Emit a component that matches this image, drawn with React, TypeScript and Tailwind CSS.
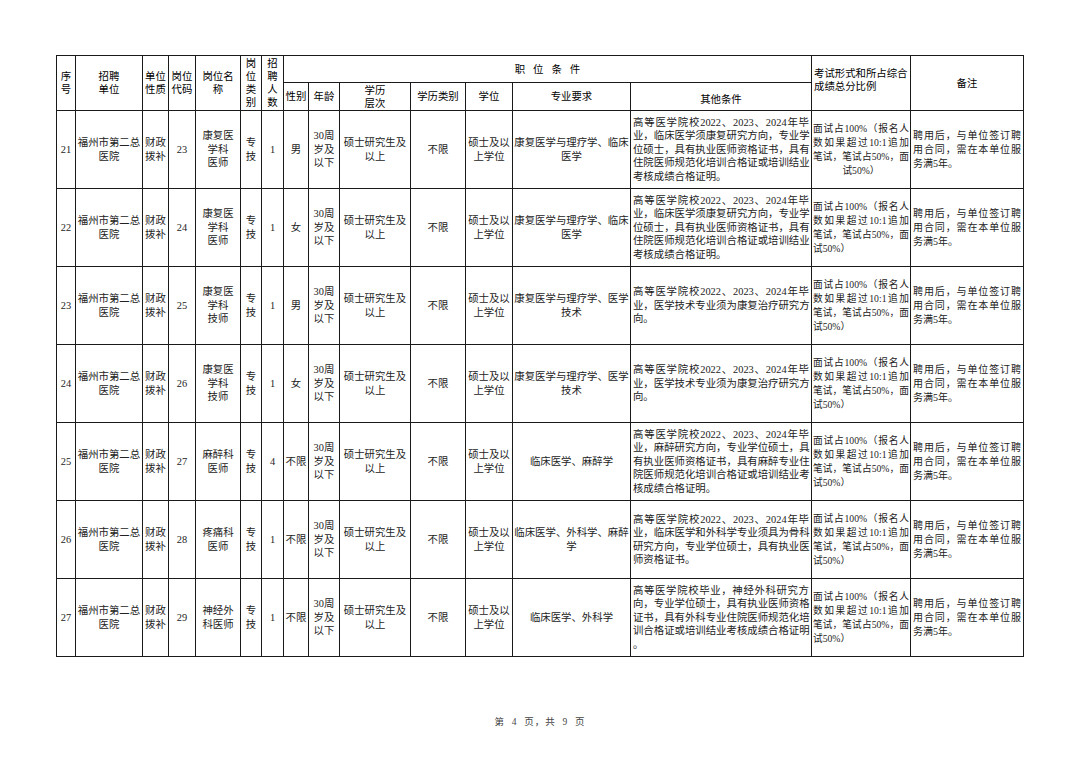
import React from 'react';

const serif = { fontFamily: '"Liberation Serif", "Noto Sans CJK SC", serif' };
const sans = { fontFamily: '"Liberation Sans", "Noto Sans CJK SC", sans-serif' };

type Row = {
  no: string;
  code: string;
  name: string[];
  count: string;
  sex: string;
  major: string[];
  other: string[];
  examCenter?: boolean;
};

const exam = ['面试占100%（报名人', '数如果超过10:1追加', '笔试，笔试占50%，面', '试50%）'];
const note = ['聘用后，与单位签订聘', '用合同，需在本单位服', '务满5年。'];

const kangfuOther = [
  '高等医学院校2022、2023、2024年毕',
  '业，临床医学须康复研究方向，专业学',
  '位硕士，具有执业医师资格证书，具有',
  '住院医师规范化培训合格证或培训结业',
  '考核成绩合格证明。',
];
const jishuOther = ['高等医学院校2022、2023、2024年毕', '业，医学技术专业须为康复治疗研究方', '向。'];

const rows: Row[] = [
  { no: '21', code: '23', name: ['康复医', '学科', '医师'], count: '1', sex: '男', major: ['康复医学与理疗学、临床', '医学'], other: kangfuOther, examCenter: true },
  { no: '22', code: '24', name: ['康复医', '学科', '医师'], count: '1', sex: '女', major: ['康复医学与理疗学、临床', '医学'], other: kangfuOther },
  { no: '23', code: '25', name: ['康复医', '学科', '技师'], count: '1', sex: '男', major: ['康复医学与理疗学、医学', '技术'], other: jishuOther },
  { no: '24', code: '26', name: ['康复医', '学科', '技师'], count: '1', sex: '女', major: ['康复医学与理疗学、医学', '技术'], other: jishuOther },
  {
    no: '25', code: '27', name: ['麻醉科', '医师'], count: '4', sex: '不限', major: ['临床医学、麻醉学'],
    other: [
      '高等医学院校2022、2023、2024年毕',
      '业，麻醉研究方向，专业学位硕士，具',
      '有执业医师资格证书，具有麻醉专业住',
      '院医师规范化培训合格证或培训结业考',
      '核成绩合格证明。',
    ],
  },
  {
    no: '26', code: '28', name: ['疼痛科', '医师'], count: '1', sex: '不限', major: ['临床医学、外科学、麻醉', '学'],
    other: [
      '高等医学院校2022、2023、2024年毕',
      '业，临床医学和外科学专业须具为骨科',
      '研究方向，专业学位硕士，具有执业医',
      '师资格证书。',
    ],
  },
  {
    no: '27', code: '29', name: ['神经外', '科医师'], count: '1', sex: '不限', major: ['临床医学、外科学'],
    other: [
      '高等医学院校毕业，神经外科研究方',
      '向，专业学位硕士，具有执业医师资格',
      '证书，具有外科专业住院医师规范化培',
      '训合格证或培训结业考核成绩合格证明',
      '。',
    ],
  },
];

function Center({ lines }: { lines: string[] }) {
  return (
    <div className="text-center">
      {lines.map((l, i) => (
        <div key={i} className="whitespace-nowrap">{l}</div>
      ))}
    </div>
  );
}

function Justified({ lines, centerLast }: { lines: string[]; centerLast?: boolean }) {
  return (
    <div>
      {lines.map((l, i) => (
        <div
          key={i}
          className={
            i < lines.length - 1
              ? 'whitespace-nowrap text-justify [text-align-last:justify]'
              : centerLast
                ? 'whitespace-nowrap text-center'
                : 'whitespace-nowrap text-left'
          }
        >
          {l}
        </div>
      ))}
    </div>
  );
}

const th = 'border border-[#1a1a1a] px-[1px] align-middle font-normal text-center';
const td = 'border border-[#1a1a1a] px-[1px] align-middle';

export default function App() {
  return (
    <div className="min-h-[764px] w-[1080px] bg-white pt-[55px] text-[#1a1a1a]">
      <table
        className="mx-auto w-[967px] table-fixed border-collapse text-[10.4px] leading-[13.5px]"
        style={serif}
      >
        <colgroup>
          <col className="w-[19px]" />
          <col className="w-[67px]" />
          <col className="w-[26px]" />
          <col className="w-[27px]" />
          <col className="w-[45px]" />
          <col className="w-[21px]" />
          <col className="w-[22px]" />
          <col className="w-[25px]" />
          <col className="w-[31px]" />
          <col className="w-[71px]" />
          <col className="w-[55px]" />
          <col className="w-[47px]" />
          <col className="w-[118px]" />
          <col className="w-[181px]" />
          <col className="w-[99px]" />
          <col className="w-[113px]" />
        </colgroup>
        <thead style={sans} className="text-[10.4px] leading-[13px] text-black">
          <tr className="h-[27px]">
            <th rowSpan={2} className={th}><Center lines={['序', '号']} /></th>
            <th rowSpan={2} className={th}><Center lines={['招聘', '单位']} /></th>
            <th rowSpan={2} className={th}><Center lines={['单位', '性质']} /></th>
            <th rowSpan={2} className={th}><Center lines={['岗位', '代码']} /></th>
            <th rowSpan={2} className={th}><Center lines={['岗位名', '称']} /></th>
            <th rowSpan={2} className={th}><Center lines={['岗', '位', '类', '别']} /></th>
            <th rowSpan={2} className={th}><Center lines={['招', '聘', '人', '数']} /></th>
            <th colSpan={7} className={th}>
              <span className="pl-[8px] tracking-[8px]">职位条件</span>
            </th>
            <th rowSpan={2} className={`${th} !text-left`}>
              <div className="pl-[1px] pb-[6px]">考试形式和所占综合<br />成绩总分比例</div>
            </th>
            <th rowSpan={2} className={th}>备注</th>
          </tr>
          <tr className="h-[28px]">
            <th className={th}>性别</th>
            <th className={th}>年龄</th>
            <th className={th}><Center lines={['学历', '层次']} /></th>
            <th className={th}>学历类别</th>
            <th className={th}>学位</th>
            <th className={th}>专业要求</th>
            <th className={th}><div className="pt-[6px]">其他条件</div></th>
          </tr>
        </thead>
        <tbody className="text-[#222]">
          {rows.map((r) => (
            <tr key={r.no} className="h-[78px]">
              <td className={`${td} text-center`}>{r.no}</td>
              <td className={td}><Center lines={['福州市第二总', '医院']} /></td>
              <td className={td}><Center lines={['财政', '拨补']} /></td>
              <td className={`${td} text-center`}>{r.code}</td>
              <td className={td}><Center lines={r.name} /></td>
              <td className={td}><Center lines={['专', '技']} /></td>
              <td className={`${td} text-center`}>{r.count}</td>
              <td className={`${td} text-center`}>{r.sex}</td>
              <td className={td}><Center lines={['30周', '岁及', '以下']} /></td>
              <td className={td}><Center lines={['硕士研究生及', '以上']} /></td>
              <td className={`${td} text-center`}>不限</td>
              <td className={td}><Center lines={['硕士及以', '上学位']} /></td>
              <td className={td}><Center lines={r.major} /></td>
              <td className={`${td} px-[2px]`}><Justified lines={r.other} /></td>
              <td className={`${td} px-[1.5px] text-[9.7px] leading-[14px]`}>
                <Justified lines={exam} centerLast={r.examCenter} />
              </td>
              <td className={`${td} px-[2px] text-[10px] leading-[14px]`}>
                <Justified lines={note} />
              </td>
            </tr>
          ))}
        </tbody>
      </table>
      <div className="mt-[58px] text-center text-[9.5px] tracking-[1px] text-[#444]" style={serif}>
        第&nbsp;&nbsp;4&nbsp;&nbsp;页，共&nbsp;&nbsp;9&nbsp;&nbsp;页
      </div>
    </div>
  );
}
